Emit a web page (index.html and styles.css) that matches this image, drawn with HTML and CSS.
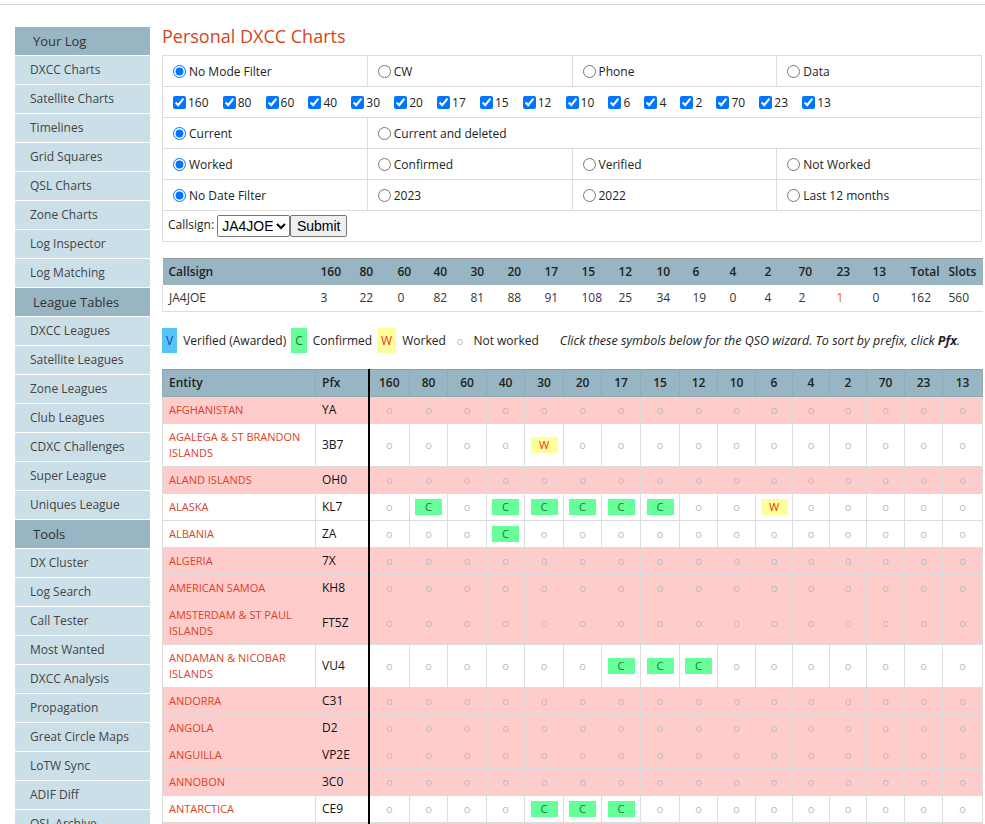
FILE: index.html
```html
<!DOCTYPE html>
<html lang="en">
<head>
<meta charset="utf-8">
<title>Personal DXCC Charts</title>
<link rel="stylesheet" href="styles.css">
</head>
<body>
<div class="topbar"></div>
<div class="layout">
  <nav class="sidebar">
    <div class="nav-head">Your Log</div>
    <a class="nav-item" href="#">DXCC Charts</a>
    <a class="nav-item" href="#">Satellite Charts</a>
    <a class="nav-item" href="#">Timelines</a>
    <a class="nav-item" href="#">Grid Squares</a>
    <a class="nav-item" href="#">QSL Charts</a>
    <a class="nav-item" href="#">Zone Charts</a>
    <a class="nav-item" href="#">Log Inspector</a>
    <a class="nav-item" href="#">Log Matching</a>
    <div class="nav-head">League Tables</div>
    <a class="nav-item" href="#">DXCC Leagues</a>
    <a class="nav-item" href="#">Satellite Leagues</a>
    <a class="nav-item" href="#">Zone Leagues</a>
    <a class="nav-item" href="#">Club Leagues</a>
    <a class="nav-item" href="#">CDXC Challenges</a>
    <a class="nav-item" href="#">Super League</a>
    <a class="nav-item" href="#">Uniques League</a>
    <div class="nav-head">Tools</div>
    <a class="nav-item" href="#">DX Cluster</a>
    <a class="nav-item" href="#">Log Search</a>
    <a class="nav-item" href="#">Call Tester</a>
    <a class="nav-item" href="#">Most Wanted</a>
    <a class="nav-item" href="#">DXCC Analysis</a>
    <a class="nav-item" href="#">Propagation</a>
    <a class="nav-item" href="#">Great Circle Maps</a>
    <a class="nav-item" href="#">LoTW Sync</a>
    <a class="nav-item" href="#">ADIF Diff</a>
    <a class="nav-item" href="#">QSL Archive</a>
  </nav>

  <main class="main">
    <h1 class="title">Personal DXCC Charts</h1>

    <table class="filters">
      <tr>
        <td><label><input type="radio" name="mode" checked>No Mode Filter</label></td>
        <td><label><input type="radio" name="mode">CW</label></td>
        <td><label><input type="radio" name="mode">Phone</label></td>
        <td><label><input type="radio" name="mode">Data</label></td>
      </tr>
      <tr>
        <td colspan="4" class="bands">
          <label><input type="checkbox" checked>160</label>
          <label><input type="checkbox" checked>80</label>
          <label><input type="checkbox" checked>60</label>
          <label><input type="checkbox" checked>40</label>
          <label><input type="checkbox" checked>30</label>
          <label><input type="checkbox" checked>20</label>
          <label><input type="checkbox" checked>17</label>
          <label><input type="checkbox" checked>15</label>
          <label><input type="checkbox" checked>12</label>
          <label><input type="checkbox" checked>10</label>
          <label><input type="checkbox" checked>6</label>
          <label><input type="checkbox" checked>4</label>
          <label><input type="checkbox" checked>2</label>
          <label><input type="checkbox" checked>70</label>
          <label><input type="checkbox" checked>23</label>
          <label><input type="checkbox" checked>13</label>
        </td>
      </tr>
      <tr>
        <td><label><input type="radio" name="cur" checked>Current</label></td>
        <td colspan="3"><label><input type="radio" name="cur">Current and deleted</label></td>
      </tr>
      <tr>
        <td><label><input type="radio" name="st" checked>Worked</label></td>
        <td><label><input type="radio" name="st">Confirmed</label></td>
        <td><label><input type="radio" name="st">Verified</label></td>
        <td><label><input type="radio" name="st">Not Worked</label></td>
      </tr>
      <tr>
        <td><label><input type="radio" name="dt" checked>No Date Filter</label></td>
        <td><label><input type="radio" name="dt">2023</label></td>
        <td><label><input type="radio" name="dt">2022</label></td>
        <td><label><input type="radio" name="dt">Last 12 months</label></td>
      </tr>
      <tr>
        <td colspan="4" class="callrow">Callsign: <select class="callsel"><option>JA4JOE</option></select><button class="submit" type="button">Submit</button></td>
      </tr>
    </table>

    <table class="summary">
      <colgroup>
        <col class="sw152">
        <col class="sw39"><col class="sw38"><col class="sw36"><col class="sw37"><col class="sw37"><col class="sw37"><col class="sw37"><col class="sw37"><col class="sw38">
        <col class="sw36"><col class="sw37"><col class="sw35"><col class="sw34"><col class="sw38"><col class="sw36"><col class="sw38"><col class="sw38"><col class="sw40">
      </colgroup>
      <tr>
        <th>Callsign</th><th>160</th><th>80</th><th>60</th><th>40</th><th>30</th><th>20</th><th>17</th><th>15</th><th>12</th><th>10</th><th>6</th><th>4</th><th>2</th><th>70</th><th>23</th><th>13</th><th>Total</th><th>Slots</th>
      </tr>
      <tr>
        <td>JA4JOE</td><td>3</td><td>22</td><td>0</td><td>82</td><td>81</td><td>88</td><td class="visited">91</td><td class="visited">108</td><td>25</td><td>34</td><td>19</td><td>0</td><td>4</td><td>2</td><td class="hot">1</td><td>0</td><td>162</td><td>560</td>
      </tr>
    </table>

    <div class="legend">
      <span class="lg-box lg-v">V</span><span class="lg-text">Verified (Awarded)</span>
      <span class="lg-box lg-c">C</span><span class="lg-text">Confirmed</span>
      <span class="lg-box lg-w">W</span><span class="lg-text">Worked</span>
      <span class="lg-o">o</span><span class="lg-text">Not worked</span>
      <span class="lg-note">Click these symbols below for the QSO wizard. To sort by prefix, click <b>Pfx</b>.</span>
    </div>

    <table class="chart">
      <colgroup>
        <col class="c-ent"><col class="c-pfx">
        <col class="w41"><col class="w38"><col class="w39"><col class="w38"><col class="w39"><col class="w38"><col class="w39"><col class="w39">
        <col class="w38"><col class="w38"><col class="w37"><col class="w37"><col class="w37"><col class="w38"><col class="w38"><col class="w40">
      </colgroup>
      <thead>
        <tr><th class="h-ent">Entity</th><th class="h-ent">Pfx</th><th class="b1">160</th><th>80</th><th>60</th><th>40</th><th>30</th><th>20</th><th>17</th><th>15</th><th>12</th><th>10</th><th>6</th><th>4</th><th>2</th><th>70</th><th>23</th><th>13</th></tr>
      </thead>
      <tbody>
        <tr class="none"><td class="ent">AFGHANISTAN</td><td class="pfx">YA</td><td class="n b1">o</td><td class="n">o</td><td class="n">o</td><td class="n">o</td><td class="n">o</td><td class="n">o</td><td class="n">o</td><td class="n">o</td><td class="n">o</td><td class="n">o</td><td class="n">o</td><td class="n">o</td><td class="n">o</td><td class="n">o</td><td class="n">o</td><td class="n">o</td></tr>
        <tr><td class="ent">AGALEGA &amp; ST BRANDON ISLANDS</td><td class="pfx">3B7</td><td class="n b1">o</td><td class="n">o</td><td class="n">o</td><td class="n">o</td><td><span class="w">W</span></td><td class="n">o</td><td class="n">o</td><td class="n">o</td><td class="n">o</td><td class="n">o</td><td class="n">o</td><td class="n">o</td><td class="n">o</td><td class="n">o</td><td class="n">o</td><td class="n">o</td></tr>
        <tr class="none"><td class="ent">ALAND ISLANDS</td><td class="pfx">OH0</td><td class="n b1">o</td><td class="n">o</td><td class="n">o</td><td class="n">o</td><td class="n">o</td><td class="n">o</td><td class="n">o</td><td class="n">o</td><td class="n">o</td><td class="n">o</td><td class="n">o</td><td class="n">o</td><td class="n">o</td><td class="n">o</td><td class="n">o</td><td class="n">o</td></tr>
        <tr><td class="ent">ALASKA</td><td class="pfx">KL7</td><td class="n b1">o</td><td><span class="c">C</span></td><td class="n">o</td><td><span class="c">C</span></td><td><span class="c">C</span></td><td><span class="c">C</span></td><td><span class="c">C</span></td><td><span class="c">C</span></td><td class="n">o</td><td class="n">o</td><td><span class="w">W</span></td><td class="n">o</td><td class="n">o</td><td class="n">o</td><td class="n">o</td><td class="n">o</td></tr>
        <tr><td class="ent">ALBANIA</td><td class="pfx">ZA</td><td class="n b1">o</td><td class="n">o</td><td class="n">o</td><td><span class="c">C</span></td><td class="n">o</td><td class="n">o</td><td class="n">o</td><td class="n">o</td><td class="n">o</td><td class="n">o</td><td class="n">o</td><td class="n">o</td><td class="n">o</td><td class="n">o</td><td class="n">o</td><td class="n">o</td></tr>
        <tr class="none"><td class="ent">ALGERIA</td><td class="pfx">7X</td><td class="n b1">o</td><td class="n">o</td><td class="n">o</td><td class="n">o</td><td class="n">o</td><td class="n">o</td><td class="n">o</td><td class="n">o</td><td class="n">o</td><td class="n">o</td><td class="n">o</td><td class="n">o</td><td class="n">o</td><td class="n">o</td><td class="n">o</td><td class="n">o</td></tr>
        <tr class="none"><td class="ent">AMERICAN SAMOA</td><td class="pfx">KH8</td><td class="n b1">o</td><td class="n">o</td><td class="n">o</td><td class="n">o</td><td class="n">o</td><td class="n">o</td><td class="n">o</td><td class="n">o</td><td class="n">o</td><td class="n">o</td><td class="n">o</td><td class="n">o</td><td class="n">o</td><td class="n">o</td><td class="n">o</td><td class="n">o</td></tr>
        <tr class="none"><td class="ent">AMSTERDAM &amp; ST PAUL ISLANDS</td><td class="pfx">FT5Z</td><td class="n b1">o</td><td class="n">o</td><td class="n">o</td><td class="n">o</td><td class="n">o</td><td class="n">o</td><td class="n">o</td><td class="n">o</td><td class="n">o</td><td class="n">o</td><td class="n">o</td><td class="n">o</td><td class="n">o</td><td class="n">o</td><td class="n">o</td><td class="n">o</td></tr>
        <tr><td class="ent">ANDAMAN &amp; NICOBAR ISLANDS</td><td class="pfx">VU4</td><td class="n b1">o</td><td class="n">o</td><td class="n">o</td><td class="n">o</td><td class="n">o</td><td class="n">o</td><td><span class="c">C</span></td><td><span class="c">C</span></td><td><span class="c">C</span></td><td class="n">o</td><td class="n">o</td><td class="n">o</td><td class="n">o</td><td class="n">o</td><td class="n">o</td><td class="n">o</td></tr>
        <tr class="none"><td class="ent">ANDORRA</td><td class="pfx">C31</td><td class="n b1">o</td><td class="n">o</td><td class="n">o</td><td class="n">o</td><td class="n">o</td><td class="n">o</td><td class="n">o</td><td class="n">o</td><td class="n">o</td><td class="n">o</td><td class="n">o</td><td class="n">o</td><td class="n">o</td><td class="n">o</td><td class="n">o</td><td class="n">o</td></tr>
        <tr class="none"><td class="ent">ANGOLA</td><td class="pfx">D2</td><td class="n b1">o</td><td class="n">o</td><td class="n">o</td><td class="n">o</td><td class="n">o</td><td class="n">o</td><td class="n">o</td><td class="n">o</td><td class="n">o</td><td class="n">o</td><td class="n">o</td><td class="n">o</td><td class="n">o</td><td class="n">o</td><td class="n">o</td><td class="n">o</td></tr>
        <tr class="none"><td class="ent">ANGUILLA</td><td class="pfx">VP2E</td><td class="n b1">o</td><td class="n">o</td><td class="n">o</td><td class="n">o</td><td class="n">o</td><td class="n">o</td><td class="n">o</td><td class="n">o</td><td class="n">o</td><td class="n">o</td><td class="n">o</td><td class="n">o</td><td class="n">o</td><td class="n">o</td><td class="n">o</td><td class="n">o</td></tr>
        <tr class="none"><td class="ent">ANNOBON</td><td class="pfx">3C0</td><td class="n b1">o</td><td class="n">o</td><td class="n">o</td><td class="n">o</td><td class="n">o</td><td class="n">o</td><td class="n">o</td><td class="n">o</td><td class="n">o</td><td class="n">o</td><td class="n">o</td><td class="n">o</td><td class="n">o</td><td class="n">o</td><td class="n">o</td><td class="n">o</td></tr>
        <tr><td class="ent">ANTARCTICA</td><td class="pfx">CE9</td><td class="n b1">o</td><td class="n">o</td><td class="n">o</td><td class="n">o</td><td><span class="c">C</span></td><td><span class="c">C</span></td><td><span class="c">C</span></td><td class="n">o</td><td class="n">o</td><td class="n">o</td><td class="n">o</td><td class="n">o</td><td class="n">o</td><td class="n">o</td><td class="n">o</td><td class="n">o</td></tr>
        <tr class="none"><td class="ent">ANTIGUA &amp; BARBUDA</td><td class="pfx">V2</td><td class="n b1">o</td><td class="n">o</td><td class="n">o</td><td class="n">o</td><td class="n">o</td><td class="n">o</td><td class="n">o</td><td class="n">o</td><td class="n">o</td><td class="n">o</td><td class="n">o</td><td class="n">o</td><td class="n">o</td><td class="n">o</td><td class="n">o</td><td class="n">o</td></tr>
      </tbody>
    </table>
  </main>
</div>
</body>
</html>
```
FILE: styles.css
```css
html, body {
  margin: 0;
  padding: 0;
  background: #fff;
}
body {
  font-family: "Open Sans", "DejaVu Sans", sans-serif;
  font-size: 12px;
  color: #222;
}
.topbar {
  height: 4px;
  border-bottom: 1px solid #d4d4d4;
}
.layout {
  display: flex;
  align-items: flex-start;
  gap: 12px;
  padding: 22px 0 0 15px;
}

/* sidebar */
.sidebar {
  width: 135px;
  flex: none;
}
.nav-head {
  background: #97b5c2;
  color: #333;
  font-size: 13px;
  line-height: 28px;
  padding-left: 18px;
  border-bottom: 1px solid #fff;
}
.nav-item {
  display: block;
  background: #cbdfe8;
  color: #444;
  font-size: 12px;
  line-height: 28px;
  padding-left: 15px;
  border-bottom: 1px solid #fff;
  text-decoration: none;
  white-space: nowrap;
}

/* main */
.main {
  width: 820px;
  flex: none;
}
.title {
  margin: 0;
  font-size: 18px;
  font-weight: normal;
  color: #d2461e;
  line-height: 19px;
  padding-bottom: 9px;
}

.filters {
  width: 820px;
  border-collapse: collapse;
  table-layout: fixed;
}
.filters td {
  width: 25%;
  border: 1px solid #dcdcdc;
  height: 30px;
  padding: 0 5px;
  font-size: 12px;
  color: #222;
  vertical-align: middle;
}
.filters label {
  white-space: nowrap;
}
.filters input[type="radio"] {
  margin: 3px 3px 0 5px;
  vertical-align: -2px;
}
.filters .bands {
  padding-left: 6px;
}
.bands label {
  display: inline-block;
  margin-right: 7px;
}
.bands input[type="checkbox"] {
  margin: 0 2px 0 4px;
  vertical-align: -2px;
}
.callrow {
  padding-left: 5px;
}
.callsel {
  font-family: "Liberation Sans", Arial, sans-serif;
  font-size: 14px;
  height: 22px;
  width: 73px;
  padding: 0;
  vertical-align: middle;
  color: #000;
  border: 1px solid #767676;
  border-radius: 2px;
  background: #fff;
}
.submit {
  font-family: "Liberation Sans", Arial, sans-serif;
  font-size: 14px;
  height: 22px;
  width: 57px;
  padding: 0;
  vertical-align: middle;
  color: #000;
  background: #efefef;
  border: 1px solid #767676;
  border-radius: 2px;
}

/* summary */
.summary {
  width: 820px;
  margin-top: 16px;
  border-collapse: collapse;
  table-layout: fixed;
}
.summary .sw152 { width: 152px; }
.summary .sw34 { width: 34px; }
.summary .sw35 { width: 35px; }
.summary .sw36 { width: 36px; }
.summary .sw37 { width: 37px; }
.summary .sw38 { width: 38px; }
.summary .sw39 { width: 39px; }
.summary .sw40 { width: 40px; }
.summary th, .summary td {
  text-align: left;
  padding: 5px 6px;
  line-height: 16px;
  font-size: 12px;
  white-space: nowrap;
  overflow: visible;
}
.summary th {
  background: #97b5c2;
  font-weight: 600;
  color: #222;
  border-top: 1px solid #9a9a9a;
}
.summary td {
  border-bottom: 1px solid #dcdcdc;
  color: #333;
}
.summary tr:last-child td:first-child {
  border-left: 1px solid #e4e4e4;
}
.summary .visited { color: #4a2a55; }
.summary .hot { color: #e0660f; }

/* legend */
.legend {
  display: flex;
  align-items: center;
  height: 25px;
  margin-top: 16px;
  font-size: 12px;
  color: #222;
  white-space: nowrap;
}
.lg-box {
  height: 25px;
  line-height: 25px;
  padding: 0 4px;
}
.lg-v { background: #55c4f7; color: #2a36c8; }
.lg-c { background: #66ff99; color: #1a7a2a; }
.lg-w { background: #ffff99; color: #ee3322; }
.lg-text {
  margin: 0 5px 0 6px;
}
.lg-o {
  color: #bbb;
  font-size: 11px;
  margin: 0 4px 0 6px;
}
.lg-note {
  font-style: italic;
  font-size: 12.5px;
  margin-left: 16px;
}
.lg-note b {
  font-weight: 700;
}

/* chart */
.chart {
  width: 820px;
  margin-top: 16px;
  border-collapse: collapse;
  table-layout: fixed;
}
.chart .c-ent { width: 153px; }
.chart .c-pfx { width: 53px; }
.chart .w37 { width: 37px; }
.chart .w38 { width: 38px; }
.chart .w39 { width: 39px; }
.chart .w40 { width: 40px; }
.chart .w41 { width: 41px; }
.chart th {
  background: #97b5c2;
  font-weight: 600;
  font-size: 12px;
  color: #222;
  padding: 5px 2px;
  line-height: 16px;
  text-align: center;
  border: 1px solid #8fa9b5;
  border-top: 1px solid #9a9a9a;
}
.chart th.h-ent {
  text-align: left;
  padding-left: 6px;
}
.chart td {
  border: 1px solid #dcdcdc;
  padding: 5px 0;
  line-height: 16px;
  text-align: center;
  font-size: 12px;
}
.chart tr.none td {
  background: #ffcccc;
}
.chart td.ent {
  text-align: left;
  padding: 5px 6px;
  font-size: 11px;
  color: #d8432a;
}
.chart td.pfx {
  text-align: left;
  padding: 5px 6px;
  font-size: 12px;
  color: #111;
}
.chart .b1 {
  border-left: 2px solid #000;
}
.chart td.n {
  color: #bbb;
  font-size: 11px;
}
.chart .c, .chart .w {
  display: inline-block;
  width: 27px;
  line-height: 16px;
  font-size: 11px;
  vertical-align: top;
}
.chart .c { background: #66ff99; color: #1a7a2a; }
.chart .w { background: #ffff99; color: #ee3322; }
```
